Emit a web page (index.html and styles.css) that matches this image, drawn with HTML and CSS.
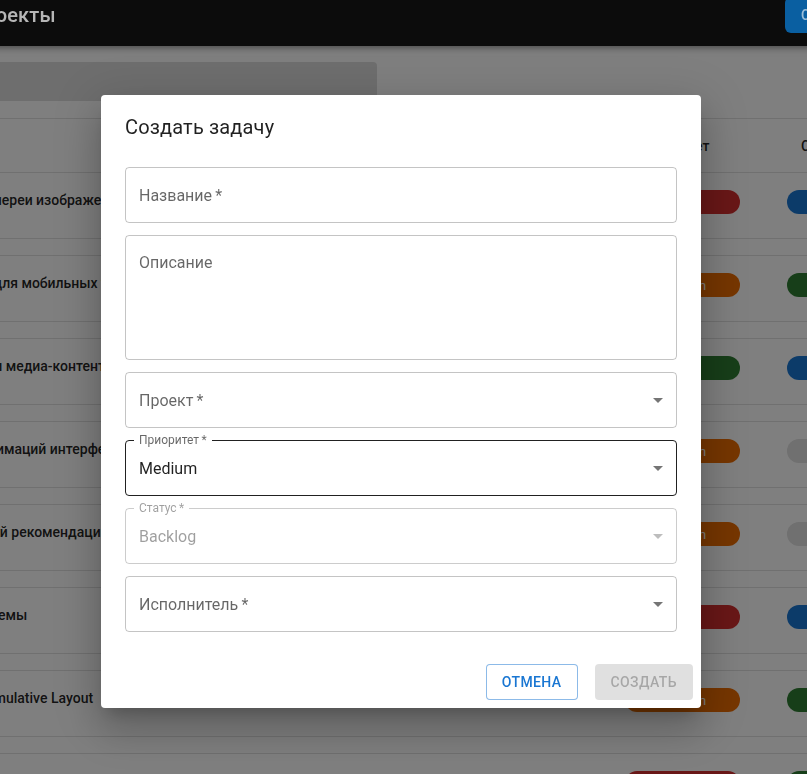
FILE: index.html
```html
<!DOCTYPE html>
<html lang="ru">
<head>
<meta charset="utf-8">
<title>Проекты</title>
<link rel="stylesheet" href="styles.css">
</head>
<body>
<div class="page">
  <header class="appbar">
    <div class="appbar-title">Проекты</div>
    <button class="appbar-btn">Создать задачу</button>
  </header>
  <main class="content">
    <div class="filterbar"></div>
    <div class="table">
      <div class="thead">
        <div class="c-title h-title">Название</div>
        <div class="c-prio h-cell">Приоритет</div>
        <div class="c-status h-cell">Статус</div>
      </div>

      <div class="row"><div class="c-title">Разработка галереи изображений</div><div class="c-prio"><span class="chip red">High</span></div><div class="c-status"><span class="chip blue">In Progress</span></div></div>
      <div class="spacer"></div>
      <div class="row"><div class="c-title">Оптимизация для мобильных устройств</div><div class="c-prio"><span class="chip orange">Medium</span></div><div class="c-status"><span class="chip green">Done</span></div></div>
      <div class="spacer"></div>
      <div class="row"><div class="c-title">Кэширование и медиа-контент</div><div class="c-prio"><span class="chip green">Low</span></div><div class="c-status"><span class="chip blue">In Progress</span></div></div>
      <div class="spacer"></div>
      <div class="row"><div class="c-title">Разработка анимаций интерфейса</div><div class="c-prio"><span class="chip orange">Medium</span></div><div class="c-status"><span class="chip grey">Backlog</span></div></div>
      <div class="spacer"></div>
      <div class="row"><div class="c-title">Прототип умной рекомендации</div><div class="c-prio"><span class="chip orange">Medium</span></div><div class="c-status"><span class="chip grey">Backlog</span></div></div>
      <div class="spacer"></div>
      <div class="row"><div class="c-title">Обновление схемы</div><div class="c-prio"><span class="chip red">High</span></div><div class="c-status"><span class="chip blue">In Progress</span></div></div>
      <div class="spacer"></div>
      <div class="row"><div class="c-title">Улучшение Cumulative Layout</div><div class="c-prio"><span class="chip orange">Medium</span></div><div class="c-status"><span class="chip green">Done</span></div></div>
      <div class="spacer"></div>
      <div class="row"><div class="c-title">Рефакторинг API</div><div class="c-prio"><span class="chip red">High</span></div><div class="c-status"><span class="chip green">Done</span></div></div>
      <div class="spacer"></div>
    </div>
  </main>
</div>

<div class="backdrop"></div>

<div class="modal">
  <div class="dialog" role="dialog">
    <h2 class="dialog-title">Создать задачу</h2>
    <div class="dialog-content">
      <div class="field">
        <span class="value placeholder">Название&thinsp;*</span>
        <fieldset class="outline"><legend class="blank"></legend></fieldset>
      </div>
      <div class="field multi">
        <span class="value placeholder">Описание</span>
        <fieldset class="outline"><legend class="blank"></legend></fieldset>
      </div>
      <div class="field">
        <span class="value placeholder">Проект&thinsp;*</span>
        <svg class="arrow" viewBox="0 0 24 24"><path d="M7 10l5 5 5-5z"/></svg>
        <fieldset class="outline"><legend class="blank"></legend></fieldset>
      </div>
      <div class="field">
        <span class="value filled">Medium</span>
        <svg class="arrow" viewBox="0 0 24 24"><path d="M7 10l5 5 5-5z"/></svg>
        <fieldset class="outline dark"><legend>Приоритет&thinsp;*</legend></fieldset>
      </div>
      <div class="field disabled">
        <span class="value">Backlog</span>
        <svg class="arrow" viewBox="0 0 24 24"><path d="M7 10l5 5 5-5z"/></svg>
        <fieldset class="outline"><legend>Статус&thinsp;*</legend></fieldset>
      </div>
      <div class="field">
        <span class="value placeholder">Исполнитель&thinsp;*</span>
        <svg class="arrow" viewBox="0 0 24 24"><path d="M7 10l5 5 5-5z"/></svg>
        <fieldset class="outline"><legend class="blank"></legend></fieldset>
      </div>
    </div>
    <div class="dialog-actions">
      <button class="btn btn-outlined">Отмена</button>
      <button class="btn btn-contained" disabled>Создать</button>
    </div>
  </div>
</div>
</body>
</html>
```

FILE: styles.css
```css
html, body {
  margin: 0;
  padding: 0;
  overflow: hidden;
  background: #fff;
  font-family: Roboto, "Noto Sans", sans-serif;
}

.page {
  margin: -17px 0 0 -124px;
  width: 1083px;
}

/* App bar */
.appbar {
  position: relative;
  z-index: 15;
  height: 63px;
  background: #0c0c0c;
  display: flex;
  align-items: center;
  padding-left: 94px;
  box-shadow: 0 2px 4px -1px rgba(0,0,0,.2), 0 4px 5px 0 rgba(0,0,0,.14), 0 1px 10px 0 rgba(0,0,0,.12);
}
.appbar-title {
  flex: 0 0 815px;
  font-size: 20px;
  font-weight: 500;
  letter-spacing: .15px;
  color: rgba(255,255,255,.7);
}
.appbar-btn {
  height: 36px;
  padding: 6px 16px;
  border: 0;
  border-radius: 6px;
  background: #0a5fa1;
  color: rgba(255,255,255,.6);
  font: 500 14px/24px Roboto, sans-serif;
  letter-spacing: .4px;
  text-transform: uppercase;
  white-space: nowrap;
}

/* Content */
.content {
  padding-top: 16px;
}
.filterbar {
  margin-left: 24px;
  width: 477px;
  height: 39px;
  background: #dcdcdc;
  border-radius: 4px;
}
.table {
  margin: 17px 0 0 8px;
  border-top: 1px solid #e0e0e0;
  color: rgba(0,0,0,.87);
  font-size: 14px;
}
.thead {
  display: flex;
  align-items: center;
  height: 53px;
  border-bottom: 1px solid #e0e0e0;
  font-weight: 500;
}
.row {
  display: flex;
  align-items: flex-start;
  height: 65px;
  border-bottom: 1px solid #e0e0e0;
}
.spacer {
  height: 16px;
  border-bottom: 1px solid #e0e0e0;
}
.c-title {
  flex: 0 0 725px;
  box-sizing: border-box;
  padding-left: 16px;
  white-space: nowrap;
  overflow: hidden;
}
.row .c-title {
  padding-top: 17px;
  line-height: 20px;
  font-weight: 500;
}
.h-title {
  padding-left: 260px;
}
.c-prio {
  flex: 0 0 162px;
  box-sizing: border-box;
  padding-left: 16px;
}
.c-status {
  flex: 0 0 160px;
  box-sizing: border-box;
  padding-left: 16px;
}
.h-cell {
  padding-left: 30px;
}
.row .c-prio, .row .c-status {
  padding-top: 17px;
}
.chip {
  display: flex;
  align-items: center;
  justify-content: center;
  width: 115px;
  height: 24px;
  border-radius: 12px;
  font-size: 13px;
  color: #fff;
}
.c-status .chip {
  width: 130px;
}
.red { background: #d32f2f; }
.orange { background: #ed6c02; }
.green { background: #2e7d32; }
.blue { background: #1976d2; }
.grey { background: #e0e0e0; color: rgba(0,0,0,.87); }

/* Backdrop + dialog */
.backdrop {
  position: fixed;
  inset: 0;
  z-index: 10;
  background: rgba(0,0,0,.5);
}
.modal {
  position: fixed;
  inset: 0;
  z-index: 20;
  display: flex;
  align-items: flex-start;
  padding: 95px 0 0 101px;
}
.dialog {
  width: 600px;
  background: #fff;
  border-radius: 4px;
  display: flex;
  flex-direction: column;
  box-shadow: 0 11px 15px -7px rgba(0,0,0,.2), 0 24px 38px 3px rgba(0,0,0,.14), 0 9px 46px 8px rgba(0,0,0,.12);
}
.dialog-title {
  margin: 0;
  padding: 16px 24px;
  font-size: 20px;
  line-height: 32px;
  font-weight: 400;
  letter-spacing: .15px;
  color: rgba(0,0,0,.87);
}
.dialog-content {
  padding: 8px 24px 24px;
  display: flex;
  flex-direction: column;
  gap: 12px;
}
.field {
  position: relative;
  height: 56px;
  display: flex;
  align-items: center;
  padding: 0 10px 0 14px;
  font-size: 16px;
  line-height: 23px;
  color: rgba(0,0,0,.6);
}
.field.multi {
  height: 125px;
  align-items: flex-start;
  padding-top: 16px;
  box-sizing: border-box;
}
.field .value {
  flex: 1;
}
.field .filled {
  color: rgba(0,0,0,.87);
}
.field.disabled .value {
  color: rgba(0,0,0,.38);
}
.arrow {
  width: 24px;
  height: 24px;
  margin-right: -3px;
  fill: rgba(0,0,0,.54);
}
.field.disabled .arrow {
  fill: rgba(0,0,0,.26);
}
.outline {
  position: absolute;
  inset: -5px 0 0 0;
  margin: 0;
  padding: 0 8px;
  border: 1px solid rgba(0,0,0,.23);
  border-radius: 4px;
  pointer-events: none;
}
.outline.dark {
  border-color: rgba(0,0,0,.87);
}
.field.disabled .outline {
  border-color: rgba(0,0,0,.2);
}
.outline legend {
  padding: 0 5px;
  height: 11px;
  font-size: 12px;
  line-height: 11px;
  color: rgba(0,0,0,.6);
}
.field.disabled .outline legend {
  color: rgba(0,0,0,.38);
}
.outline legend.blank {
  padding: 0;
  width: 0;
}
.dialog-actions {
  padding: 8px;
  display: flex;
  justify-content: flex-end;
  gap: 17px;
}
.btn {
  height: 36px;
  border-radius: 4px;
  font: 500 14px/24px Roboto, sans-serif;
  letter-spacing: .4px;
  text-transform: uppercase;
}
.btn-outlined {
  padding: 5px 15px;
  border: 1px solid rgba(25,118,210,.5);
  background: #fff;
  color: #1976d2;
}
.btn-contained {
  padding: 6px 16px;
  border: 0;
  background: rgba(0,0,0,.12);
  color: rgba(0,0,0,.26);
}
```
